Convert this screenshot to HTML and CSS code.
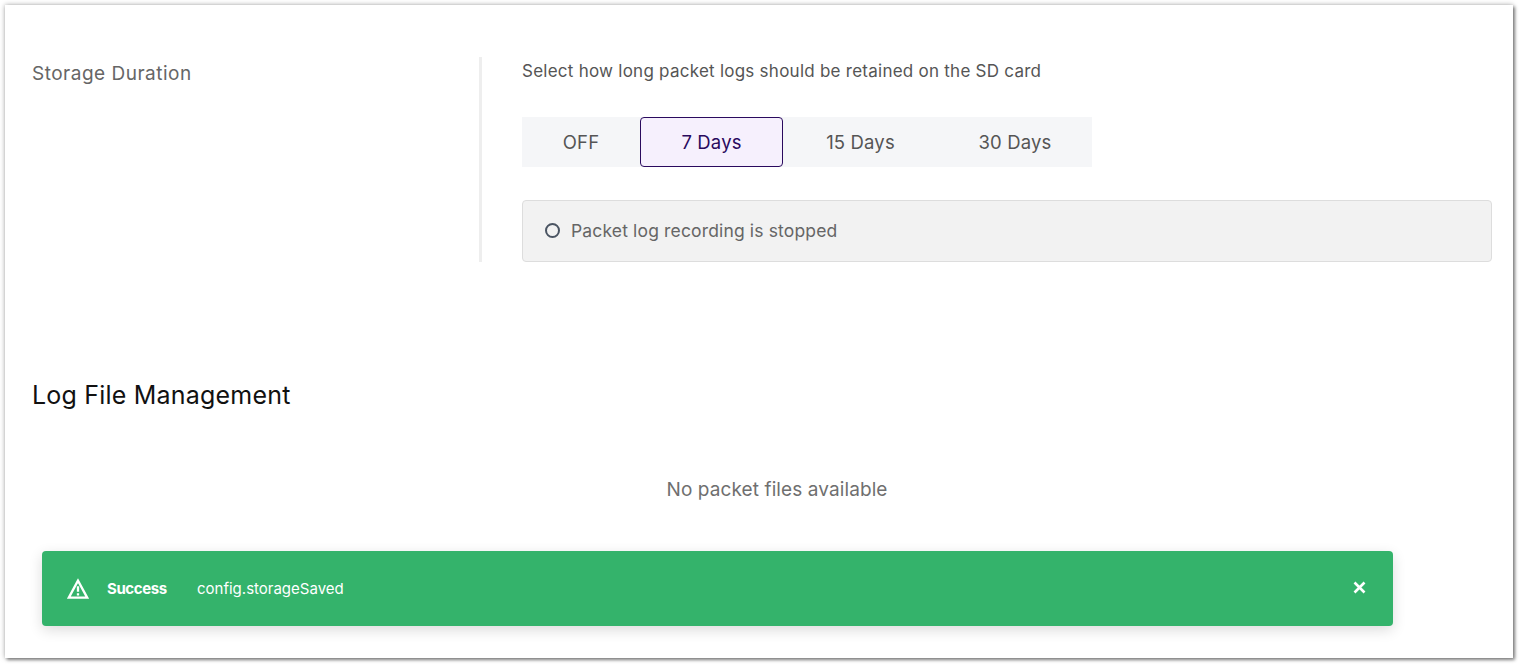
FILE: index.html
```html
<!DOCTYPE html>
<html lang="en">

<head>
    <meta charset="UTF-8">
    <meta name="viewport" content="width=device-width, initial-scale=1.0">
    <title>Packet Log Settings</title>
    <link rel="stylesheet" href="styles.css">
</head>

<body>
    <div class="card">
        <section class="storage-row">
            <div class="row-label">Storage Duration</div>
            <div class="row-content">
                <p class="row-desc">Select how long packet logs should be retained on the SD card</p>
                <div class="tabs">
                    <button class="tab tab-off">OFF</button>
                    <button class="tab tab-7 active">7 Days</button>
                    <button class="tab tab-15">15 Days</button>
                    <button class="tab tab-30">30 Days</button>
                </div>
                <div class="status-box">
                    <span class="status-dot"></span>
                    <span>Packet log recording is stopped</span>
                </div>
            </div>
        </section>

        <h2 class="section-title">Log File Management</h2>
        <p class="empty-text">No packet files available</p>

        <div class="toast">
            <svg class="toast-icon" width="22" height="22" viewBox="0 0 22 22" fill="none" stroke="#fff" stroke-width="2.3" stroke-linejoin="miter">
                <path d="M11 2.6 1.8 19.7h18.4z" />
                <path d="M11 8.2v5.6M11 15.2v2.2" />
            </svg>
            <span class="toast-title">Success</span>
            <span class="toast-msg">config.storageSaved</span>
            <svg class="toast-close" width="13" height="13" viewBox="0 0 13 13" fill="none" stroke="#fff" stroke-width="2.6">
                <path d="M1.5 1.5l10 10M11.5 1.5l-10 10" />
            </svg>
        </div>
    </div>
</body>

</html>
```

FILE: styles.css
```css
* {
    box-sizing: border-box;
    margin: 0;
    padding: 0;
}

body {
    font-family: Inter, "Noto Sans", sans-serif;
    background-color: #ffffff;
    height: 667px;
    padding: 5px 9px 9px 5px;
    overflow: hidden;
}

.card {
    position: relative;
    height: 653px;
    background: #ffffff;
    padding: 52px 21px 0 27px;
    box-shadow: 0 0 5px rgba(0, 0, 0, 0.35), 2px 2px 3px rgba(0, 0, 0, 0.4);
}

.storage-row {
    display: flex;
    height: 205px;
}

.row-label {
    width: 447px;
    padding-top: 6px;
    font-size: 19px;
    letter-spacing: 0.5px;
    line-height: 22px;
    color: #666666;
}

.row-content {
    flex: 1;
    border-left: 3px solid #eeeeee;
    padding-left: 40px;
}

.row-desc {
    font-size: 17px;
    letter-spacing: 0.25px;
    line-height: 20px;
    padding-top: 4px;
    color: #555555;
}

.tabs {
    display: flex;
    width: 570px;
    height: 50px;
    margin-top: 36px;
    background: #f5f6f8;
}

.tab {
    border: none;
    background: transparent;
    font-family: inherit;
    font-size: 18.5px;
    letter-spacing: 0.15px;
    color: #555555;
    border-radius: 4px;
}

.tab-off {
    width: 118px;
}

.tab-7 {
    width: 143px;
}

.tab-15 {
    width: 155px;
}

.tab-30 {
    width: 154px;
}

.tab.active {
    background: #f6f0fd;
    border: 1px solid #2a0a5e;
    color: #2a0a5e;
}

.status-box {
    display: flex;
    align-items: center;
    gap: 11px;
    height: 62px;
    margin-top: 33px;
    padding: 0 0 2px 22px;
    background: #f2f2f2;
    border: 1px solid #dddddd;
    border-radius: 4px;
    font-size: 17.5px;
    letter-spacing: 0.15px;
    color: #666666;
}

.status-dot {
    width: 15px;
    height: 15px;
    border: 2px solid #4b5563;
    border-radius: 50%;
}

.section-title {
    margin-top: 117px;
    font-size: 25px;
    letter-spacing: 0.2px;
    line-height: 32px;
    font-weight: 400;
    color: #111111;
}

.empty-text {
    margin-top: 67px;
    padding-left: 30px;
    text-align: center;
    font-size: 19px;
    letter-spacing: 0.1px;
    line-height: 24px;
    color: #6f6f6f;
}

.toast {
    position: absolute;
    left: 37px;
    top: 546px;
    width: 1351px;
    height: 75px;
    display: flex;
    align-items: center;
    padding: 0 27px 0 25px;
    background: #34b36b;
    border-radius: 4px;
    box-shadow: 0 4px 14px rgba(0, 0, 0, 0.14);
    color: #ffffff;
}

.toast-title {
    margin-left: 18px;
    width: 90px;
    font-size: 15px;
    letter-spacing: -0.4px;
    font-weight: 700;
}

.toast-msg {
    flex: 1;
    font-size: 15px;
}

.toast-close {
    margin-top: -2px;
}
```
